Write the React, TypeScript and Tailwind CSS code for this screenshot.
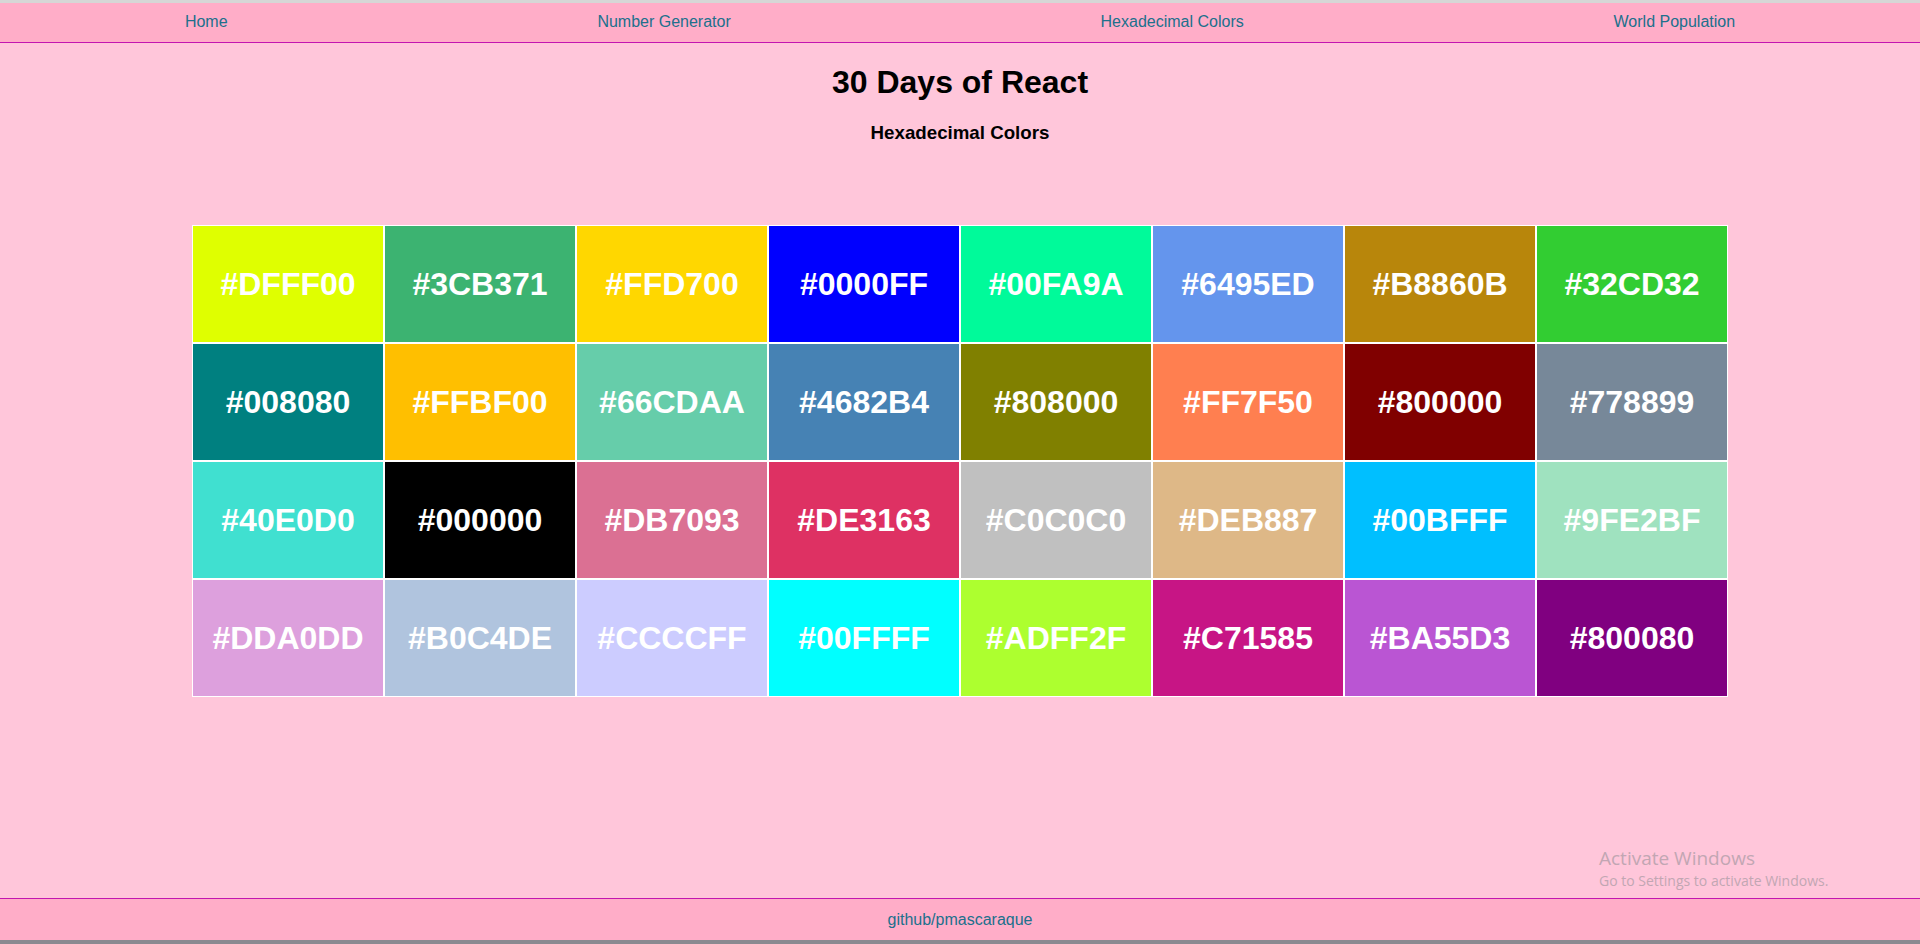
import React from 'react'

const colors = [
  '#DFFF00', '#3CB371', '#FFD700', '#0000FF', '#00FA9A', '#6495ED', '#B8860B', '#32CD32',
  '#008080', '#FFBF00', '#66CDAA', '#4682B4', '#808000', '#FF7F50', '#800000', '#778899',
  '#40E0D0', '#000000', '#DB7093', '#DE3163', '#C0C0C0', '#DEB887', '#00BFFF', '#9FE2BF',
  '#DDA0DD', '#B0C4DE', '#CCCCFF', '#00FFFF', '#ADFF2F', '#C71585', '#BA55D3', '#800080',
]

const links = ['Home', 'Number Generator', 'Hexadecimal Colors', 'World Population']

export default function App() {
  return (
    <div className="relative flex h-[944px] flex-col bg-[#ffc6da] font-['Liberation_Sans',Arial,sans-serif]">
      <div className="h-[3px] bg-[#d6d6d6]" />
      <nav className="flex h-[40px] items-center justify-around border-b border-[#c316b0] bg-[#ffadc8] pb-[1px]">
        {links.map((l) => (
          <a key={l} href="#" className="text-[16px] text-[#20708c]">{l}</a>
        ))}
      </nav>

      <main className="flex-1">
        <h1 className="mt-[21px] text-center text-[32px] font-bold leading-[37px] text-black">30 Days of React</h1>
        <h3 className="mt-[21px] text-center text-[18.72px] font-bold leading-[22px] text-black">Hexadecimal Colors</h3>
        <div className="mx-auto mt-[81px] grid w-[1536px] grid-cols-8">
          {colors.map((c) => (
            <div
              key={c}
              className="flex h-[118px] items-center justify-center border border-white text-[32px] font-bold text-white"
              style={{ background: c }}
            >
              {c}
            </div>
          ))}
        </div>
      </main>

      <footer className="flex h-[42px] items-center justify-center border-t border-[#c316b0] bg-[#ffadc8]">
        <span className="text-[16px] text-[#20708c]">github/pmascaraque</span>
      </footer>
      <div className="h-[4px] bg-[#8a8a90]" />

      <div className="pointer-events-none absolute left-[1599px] top-[845px] font-['Open_Sans','Noto_Sans',sans-serif] text-[#c2a6b3]">
        <div className="text-[19px] leading-[26px]">Activate Windows</div>
        <div className="text-[14px] leading-[20px]">Go to Settings to activate Windows.</div>
      </div>
    </div>
  )
}
